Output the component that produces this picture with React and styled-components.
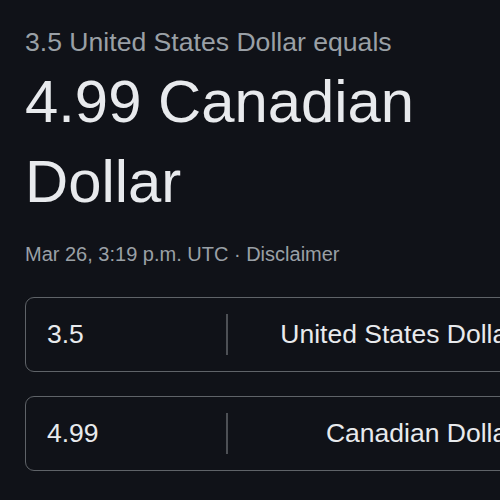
import styled, { createGlobalStyle } from "styled-components";

const GlobalStyle = createGlobalStyle`
  html, body {
    margin: 0;
    background: #101218;
    overflow: hidden;
  }
  body {
    font-family: "Liberation Sans", Arial, sans-serif;
  }
`;

/* ── Layout ── */
const Page = styled.main`
  padding: 26px 0 0 25px;
  width: 620px;
`;

const Lead = styled.div`
  font-size: 26.6px;
  line-height: 32px;
  color: #9aa0a6;
`;

const Result = styled.div`
  margin-top: 4px;
  font-size: 59.8px;
  line-height: 80px;
  color: #e8eaed;
  width: 430px;
`;

const Meta = styled.div`
  margin-top: 19.5px;
  font-size: 20px;
  line-height: 24px;
  color: #9aa0a6;
`;

/* ── Converter rows ── */
const Rows = styled.div`
  margin-top: 31px;
  display: flex;
  flex-direction: column;
  gap: 24px;
`;

const Field = styled.div`
  display: flex;
  align-items: center;
  height: 75px;
  box-sizing: border-box;
  border: 1.5px solid #5f6368;
  border-radius: 9px;
  width: 600px;
`;

const Amount = styled.div`
  width: 200px;
  box-sizing: border-box;
  padding-left: 21px;
  font-size: 26.5px;
  color: #e8eaed;
`;

const Divider = styled.div`
  width: 1.5px;
  height: 41px;
  background: #4d5055;
`;

const Unit = styled.div`
  flex: 1;
  text-align: right;
  padding-right: 108px;
  font-size: 26.5px;
  color: #e8eaed;
  white-space: nowrap;
`;

const rows = [
  { amount: "3.5", unit: "United States Dollar" },
  { amount: "4.99", unit: "Canadian Dollar" },
];

const App = () => (
  <>
    <GlobalStyle />
    <Page>
      <Lead>3.5 United States Dollar equals</Lead>
      <Result>4.99 Canadian Dollar</Result>
      <Meta>Mar 26, 3:19 p.m. UTC · Disclaimer</Meta>
      <Rows>
        {rows.map(r => (
          <Field key={r.unit}>
            <Amount>{r.amount}</Amount>
            <Divider />
            <Unit>{r.unit}</Unit>
          </Field>
        ))}
      </Rows>
    </Page>
  </>
);

export default App;
